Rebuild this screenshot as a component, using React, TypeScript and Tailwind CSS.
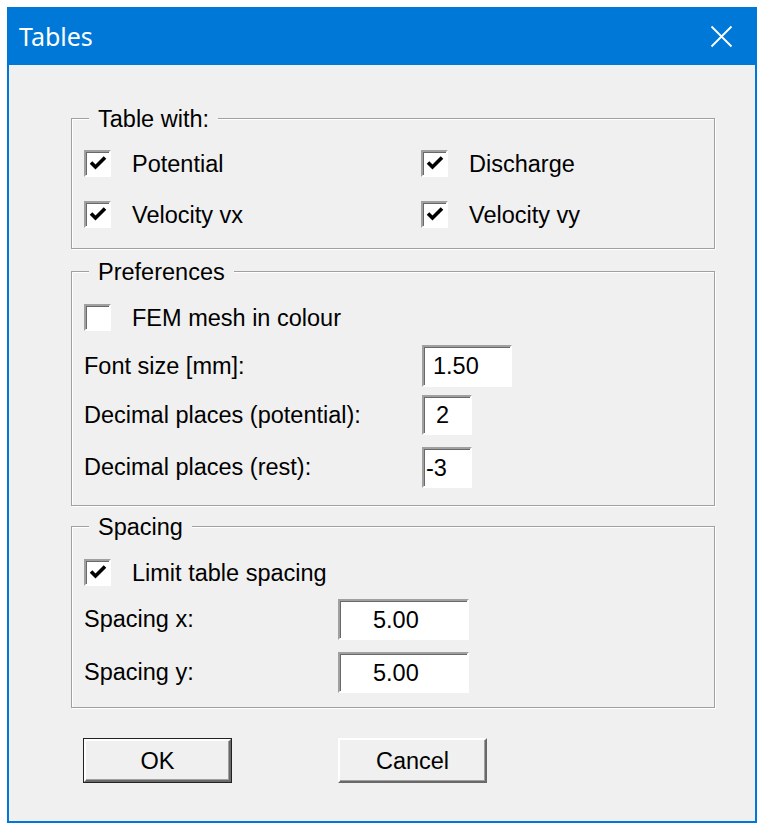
import React from 'react';

const FONT = { fontFamily: '"Liberation Sans", Arial, sans-serif' };

/* ----- small win32-like bits ----- */
function Check({ checked }: { checked: boolean }) {
  return (
    <span className="flex h-[27px] w-[27px] shrink-0 items-center justify-center border-2 border-t-[#a0a0a0] border-l-[#a0a0a0] border-b-white border-r-white bg-white shadow-[inset_1px_1px_0_#696969]">
      {checked && (
        <svg width="18" height="16" viewBox="0 0 18 16">
          <polyline points="2,7.5 6.5,12 16,2.5" fill="none" stroke="#000" strokeWidth="3.6" />
        </svg>
      )}
    </span>
  );
}

function CheckRow({ label, checked }: { label: string; checked: boolean }) {
  return (
    <div className="flex h-[30px] items-center gap-[21px]">
      <Check checked={checked} />
      <span className="pt-[3px] text-[23.5px] leading-none text-black">{label}</span>
    </div>
  );
}

function Field({ value, w, h = 41, pl = 10 }: { value: string; w: number; h?: number; pl?: number }) {
  return (
    <div
      className="flex items-center border-2 border-t-[#a0a0a0] border-l-[#a0a0a0] border-b-white border-r-white bg-white pt-[2px] shadow-[inset_1px_1px_0_#696969] text-[23.5px] leading-none text-black"
      style={{ width: w, height: h, paddingLeft: pl }}
    >
      {value}
    </div>
  );
}

function FieldRow({ label, labelW, children, mt }: { label: string; labelW: number; children: React.ReactNode; mt: number }) {
  return (
    <div className="flex items-center" style={{ marginTop: mt }}>
      <span className="pt-[1px] text-[23.5px] leading-none text-black" style={{ width: labelW }}>{label}</span>
      {children}
    </div>
  );
}

function Group({ title, height, mt, children }: { title: string; height: number; mt: number; children: React.ReactNode }) {
  return (
    <div
      className="relative w-[644px] border border-[#a0a0a0] shadow-[inset_1px_1px_0_#fff,1px_1px_0_#fff]"
      style={{ height, marginTop: mt }}
    >
      {/* legend sits on the top edge */}
      <span className="absolute left-[17px] top-[-13px] bg-[#f0f0f0] px-[9px] text-[23.5px] leading-[26px] text-black">{title}</span>
      <div className="pl-[12px]">{children}</div>
    </div>
  );
}

function Button({ label, isDefault }: { label: string; isDefault?: boolean }) {
  return (
    <div className={`h-[45px] w-[149px] ${isDefault ? 'border border-[#222]' : ''}`}>
      <div className="flex h-full w-full items-center justify-center border-2 border-t-white border-l-white border-b-[#696969] border-r-[#696969] bg-[#f0f0f0] pt-[2px] shadow-[inset_-1px_-1px_0_#a0a0a0] text-[23.5px] leading-none text-black">
        {label}
      </div>
    </div>
  );
}

export default function App() {
  return (
    <div className="h-[829px] w-[775px] bg-white pl-[7px] pt-[7px]" style={FONT}>
      <div className="flex h-[816px] w-[750px] flex-col border-2 border-t-0 border-[#0078d7] bg-[#f0f0f0]">
        {/* title bar */}
        <div className="flex h-[58px] shrink-0 items-center justify-between bg-[#0078d7] pl-[10px] pr-[22px]">
          <span className="text-[25px] leading-none text-white" style={{ fontFamily: '"Noto Sans", "Open Sans", sans-serif' }}>
            Tables
          </span>
          <svg width="23" height="23" viewBox="0 0 23 23">
            <path d="M1.5 1.5 L21.5 21.5 M21.5 1.5 L1.5 21.5" stroke="#fff" strokeWidth="1.8" />
          </svg>
        </div>

        <div className="pl-[62px]">
          <Group title="Table with:" height={131} mt={53}>
            <div className="grid grid-cols-[337px_1fr] gap-y-[21px] pt-[29px]">
              <CheckRow label="Potential" checked />
              <CheckRow label="Discharge" checked />
              <CheckRow label="Velocity vx" checked />
              <CheckRow label="Velocity vy" checked />
            </div>
          </Group>

          <Group title="Preferences" height={235} mt={22}>
            <div className="pt-[30px]">
              <CheckRow label="FEM mesh in colour" checked={false} />
              <FieldRow label="Font size [mm]:" labelW={338} mt={13}>
                <Field value="1.50" w={90} h={42} pl={9} />
              </FieldRow>
              <FieldRow label="Decimal places (potential):" labelW={338} mt={8}>
                <Field value="2" w={50} h={40} pl={12} />
              </FieldRow>
              <FieldRow label="Decimal places (rest):" labelW={338} mt={12}>
                <Field value="-3" w={50} h={41} pl={2} />
              </FieldRow>
            </div>
          </Group>

          <Group title="Spacing" height={182} mt={20}>
            <div className="pt-[30px]">
              <CheckRow label="Limit table spacing" checked />
              <FieldRow label="Spacing x:" labelW={254} mt={12}>
                <Field value="5.00" w={131} pl={33} />
              </FieldRow>
              <FieldRow label="Spacing y:" labelW={254} mt={12}>
                <Field value="5.00" w={131} pl={33} />
              </FieldRow>
            </div>
          </Group>
        </div>

        <div className="mt-[30px] flex gap-[106px] pl-[74px]">
          <Button label="OK" isDefault />
          <Button label="Cancel" />
        </div>
      </div>
    </div>
  );
}
